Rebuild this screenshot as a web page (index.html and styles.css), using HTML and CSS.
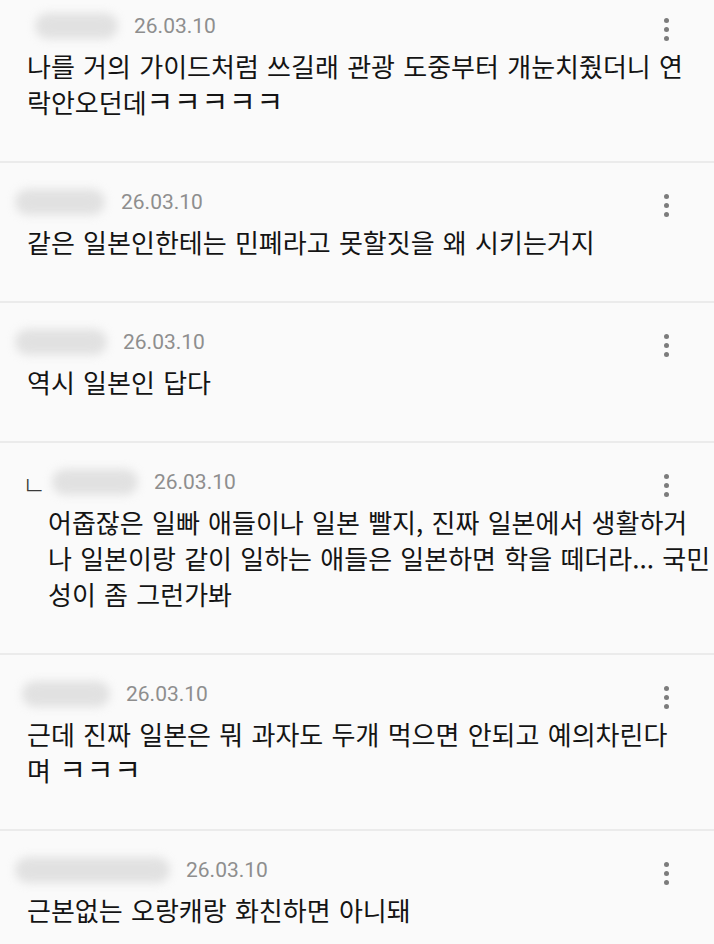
FILE: index.html
```html
<!DOCTYPE html>
<html lang="ko">
<head>
<meta charset="utf-8">
<title>댓글</title>
<link rel="stylesheet" href="styles.css">
</head>
<body>
<ul class="comments">
  <li class="comment first">
    <div class="head">
      <span class="name n1"></span>
      <span class="date">26.03.10</span>
      <span class="more"><i></i><i></i><i></i></span>
    </div>
    <p class="body">나를 거의 가이드처럼 쓰길래 관광 도중부터 개눈치줬더니 연<br>락안오던데<span class="jamo">ㅋㅋㅋㅋㅋ</span></p>
  </li>
  <li class="comment">
    <div class="head">
      <span class="name n2"></span>
      <span class="date">26.03.10</span>
      <span class="more"><i></i><i></i><i></i></span>
    </div>
    <p class="body">같은 일본인한테는 민폐라고 못할짓을 왜 시키는거지</p>
  </li>
  <li class="comment">
    <div class="head">
      <span class="name n3"></span>
      <span class="date">26.03.10</span>
      <span class="more"><i></i><i></i><i></i></span>
    </div>
    <p class="body">역시 일본인 답다</p>
  </li>
  <li class="comment reply">
    <div class="head">
      <span class="mark">ㄴ</span>
      <span class="name n4"></span>
      <span class="date">26.03.10</span>
      <span class="more"><i></i><i></i><i></i></span>
    </div>
    <p class="body">어줍잖은 일빠 애들이나 일본 빨지, 진짜 일본에서 생활하거<br>나 일본이랑 같이 일하는 애들은 일본하면 학을 떼더라... 국민<br>성이 좀 그런가봐</p>
  </li>
  <li class="comment">
    <div class="head">
      <span class="name n5"></span>
      <span class="date">26.03.10</span>
      <span class="more"><i></i><i></i><i></i></span>
    </div>
    <p class="body">근데 진짜 일본은 뭐 과자도 두개 먹으면 안되고 예의차린다<br>며 <span class="jamo">ㅋㅋㅋ</span></p>
  </li>
  <li class="comment">
    <div class="head">
      <span class="name n6"></span>
      <span class="date">26.03.10</span>
      <span class="more"><i></i><i></i><i></i></span>
    </div>
    <p class="body">근본없는 오랑캐랑 화친하면 아니돼</p>
  </li>
</ul>
</body>
</html>
```

FILE: styles.css
```css
html, body {
  margin: 0;
  padding: 0;
  background: #fafafa;
}
body {
  width: 714px;
  height: 944px;
  overflow: hidden;
  font-family: "Noto Sans CJK KR", "Noto Sans", sans-serif;
  color: #141414;
}
.comments {
  list-style: none;
  margin: 0;
  padding: 0;
}
.comment {
  padding: 25px 0 41px 15px;
  border-bottom: 2px solid #ebebeb;
}
.comment.first {
  padding-top: 12px;
}
.head {
  display: flex;
  align-items: center;
  height: 28px;
  padding-right: 45px;
}
.name {
  display: block;
  height: 26px;
  border-radius: 13px;
  background: #d9d9d9;
  filter: blur(5px);
  opacity: 0.75;
}
.n1 { margin-left: 20px; width: 83px; }
.n2 { width: 90px; }
.n3 { width: 92px; }
.n4 { margin-left: 6px; width: 86px; }
.n5 { margin-left: 7px; width: 88px; }
.n6 { width: 155px; }
.date {
  margin-left: 16px;
  font-family: Roboto, "Liberation Sans", sans-serif;
  font-size: 21px;
  color: #8e8e8e;
  line-height: 28px;
}
.mark {
  margin-left: 7px;
  font-size: 26px;
  font-weight: 300;
  color: #3a3a3a;
  line-height: 28px;
  position: relative;
  top: 2px;
}
.more {
  margin-left: auto;
  display: flex;
  flex-direction: column;
  gap: 4px;
  padding-top: 7px;
}
.more i {
  display: block;
  width: 5px;
  height: 5px;
  border-radius: 50%;
  background: #7c7c7c;
}
.body {
  margin: 8px 0 0 12px;
  font-size: 26px;
  line-height: 36px;
  word-spacing: 1px;
  white-space: nowrap;
}
.jamo {
  font-size: 29px;
  letter-spacing: 0.8px;
  line-height: 1;
}
.reply .body {
  margin-left: 33px;
}
```
